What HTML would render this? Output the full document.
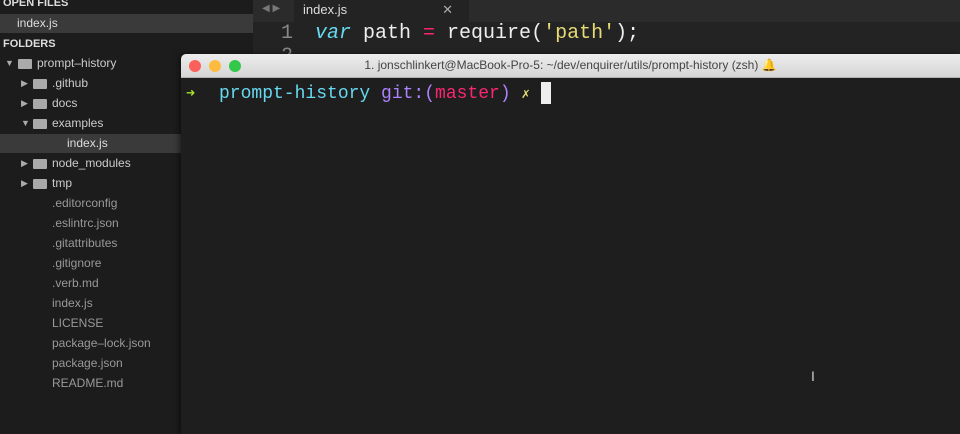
<!DOCTYPE html>
<html><head><style>
body{margin:0;width:960px;height:434px;overflow:hidden;background:#232323;font-family:"Liberation Sans",sans-serif;position:relative}
.sb{position:absolute;left:0;top:0;width:253px;height:434px;background:#1c1c1c}
.hd{position:absolute;left:3px;font-size:11px;font-weight:bold;color:#ddd}
.it{position:absolute;font-size:12px;color:#ccc;white-space:nowrap}
.sel{position:absolute;left:0;width:253px;height:19px;background:#3a3a3a}
.fl{position:absolute;width:14px;height:10px;background:#aaa;border-radius:1px}
.tri{position:absolute;font-size:9px;color:#aaa}
.f2{color:#999}
.tabbar{position:absolute;left:253px;top:0;width:707px;height:22px;background:#2b2b2b}
.tab{position:absolute;left:293px;top:0;width:175px;height:22px;background:#232323;color:#ddd;font-size:13px}
.code{position:absolute;top:22px;font-family:"Liberation Mono",monospace;font-size:20px;color:#eee;white-space:pre}
.term{position:absolute;left:181px;top:54px;width:779px;height:380px;background:#1e1e1e;border-radius:5px 0 0 0;overflow:hidden;box-shadow:-2px 0 6px rgba(0,0,0,.5)}
.tb{height:23px;background:linear-gradient(#ececec,#d6d6d6);border-bottom:1px solid #b0b0b0;text-align:center;font-size:12px;color:#444;line-height:23px}
.dot{position:absolute;top:6px;width:12px;height:12px;border-radius:50%}
.tl{position:absolute;top:28px;left:38px;font-family:"Liberation Mono",monospace;font-size:18px;white-space:pre;color:#66d9ef}
</style></head><body>
<div class="sb">
<div class="hd" style="top:-3px">OPEN FILES</div>
<div class="sel" style="top:14px"></div>
<div class="it" style="left:17px;top:16px;color:#ddd">index.js</div>
<div class="hd" style="top:38px">FOLDERS</div>
<div class="tri" style="left:5px;top:58px">▼</div><div class="fl" style="left:18px;top:59px"></div><div class="it" style="left:37px;top:56px">prompt–history</div>
<div class="tri" style="left:21px;top:78px">▶</div><div class="fl" style="left:33px;top:79px"></div><div class="it" style="left:52px;top:76px">.github</div>
<div class="tri" style="left:21px;top:98px">▶</div><div class="fl" style="left:33px;top:99px"></div><div class="it" style="left:52px;top:96px">docs</div>
<div class="tri" style="left:21px;top:118px">▼</div><div class="fl" style="left:33px;top:119px"></div><div class="it" style="left:52px;top:116px">examples</div>
<div class="sel" style="top:134px"></div>
<div class="it" style="left:67px;top:136px;color:#ddd">index.js</div>
<div class="tri" style="left:21px;top:158px">▶</div><div class="fl" style="left:33px;top:159px"></div><div class="it" style="left:52px;top:156px">node_modules</div>
<div class="tri" style="left:21px;top:178px">▶</div><div class="fl" style="left:33px;top:179px"></div><div class="it" style="left:52px;top:176px">tmp</div>
<div class="it f2" style="left:52px;top:196px">.editorconfig</div>
<div class="it f2" style="left:52px;top:216px">.eslintrc.json</div>
<div class="it f2" style="left:52px;top:236px">.gitattributes</div>
<div class="it f2" style="left:52px;top:256px">.gitignore</div>
<div class="it f2" style="left:52px;top:276px">.verb.md</div>
<div class="it f2" style="left:52px;top:296px">index.js</div>
<div class="it f2" style="left:52px;top:316px">LICENSE</div>
<div class="it f2" style="left:52px;top:336px">package–lock.json</div>
<div class="it f2" style="left:52px;top:356px">package.json</div>
<div class="it f2" style="left:52px;top:376px">README.md</div>
</div>
<div class="tabbar">
<div style="position:absolute;left:9px;top:3px;color:#777;font-size:10px">◀ ▶</div>
<div class="tab" style="left:41px"><span style="position:absolute;left:9px;top:2px">index.js</span><span style="position:absolute;right:16px;top:2px;color:#aaa">✕</span></div>
</div>
<div class="code" style="left:281px;color:#888">1</div>
<div class="code" style="left:315px"><i style="color:#66d9ef">var</i> path <span style="color:#f92672">=</span> require(<span style="color:#e6db74">'path'</span>);</div>
<div class="code" style="left:281px;top:45px;color:#888">2</div>
<div class="term">
<div class="tb">1. jonschlinkert@MacBook-Pro-5: ~/dev/enquirer/utils/prompt-history (zsh) 🔔</div>
<div class="dot" style="left:8px;background:#fc605c"></div>
<div class="dot" style="left:28px;background:#fdbc40"></div>
<div class="dot" style="left:48px;background:#34c84a"></div>
<div class="tl" style="left:5px;color:#a6e22e;font-size:15px;top:30px">➜</div>
<div class="tl">prompt-history <span style="color:#ae81ff">git:(</span><span style="color:#f92672">master</span><span style="color:#ae81ff">)</span> <span style="color:#e6db74;font-size:14px">✗</span> <span style="display:inline-block;width:10px;height:22px;background:#eee;vertical-align:middle"></span></div>
<div style="position:absolute;left:630px;top:314px;color:#ccc;font-size:14px">I</div>
</div>
</body></html>
